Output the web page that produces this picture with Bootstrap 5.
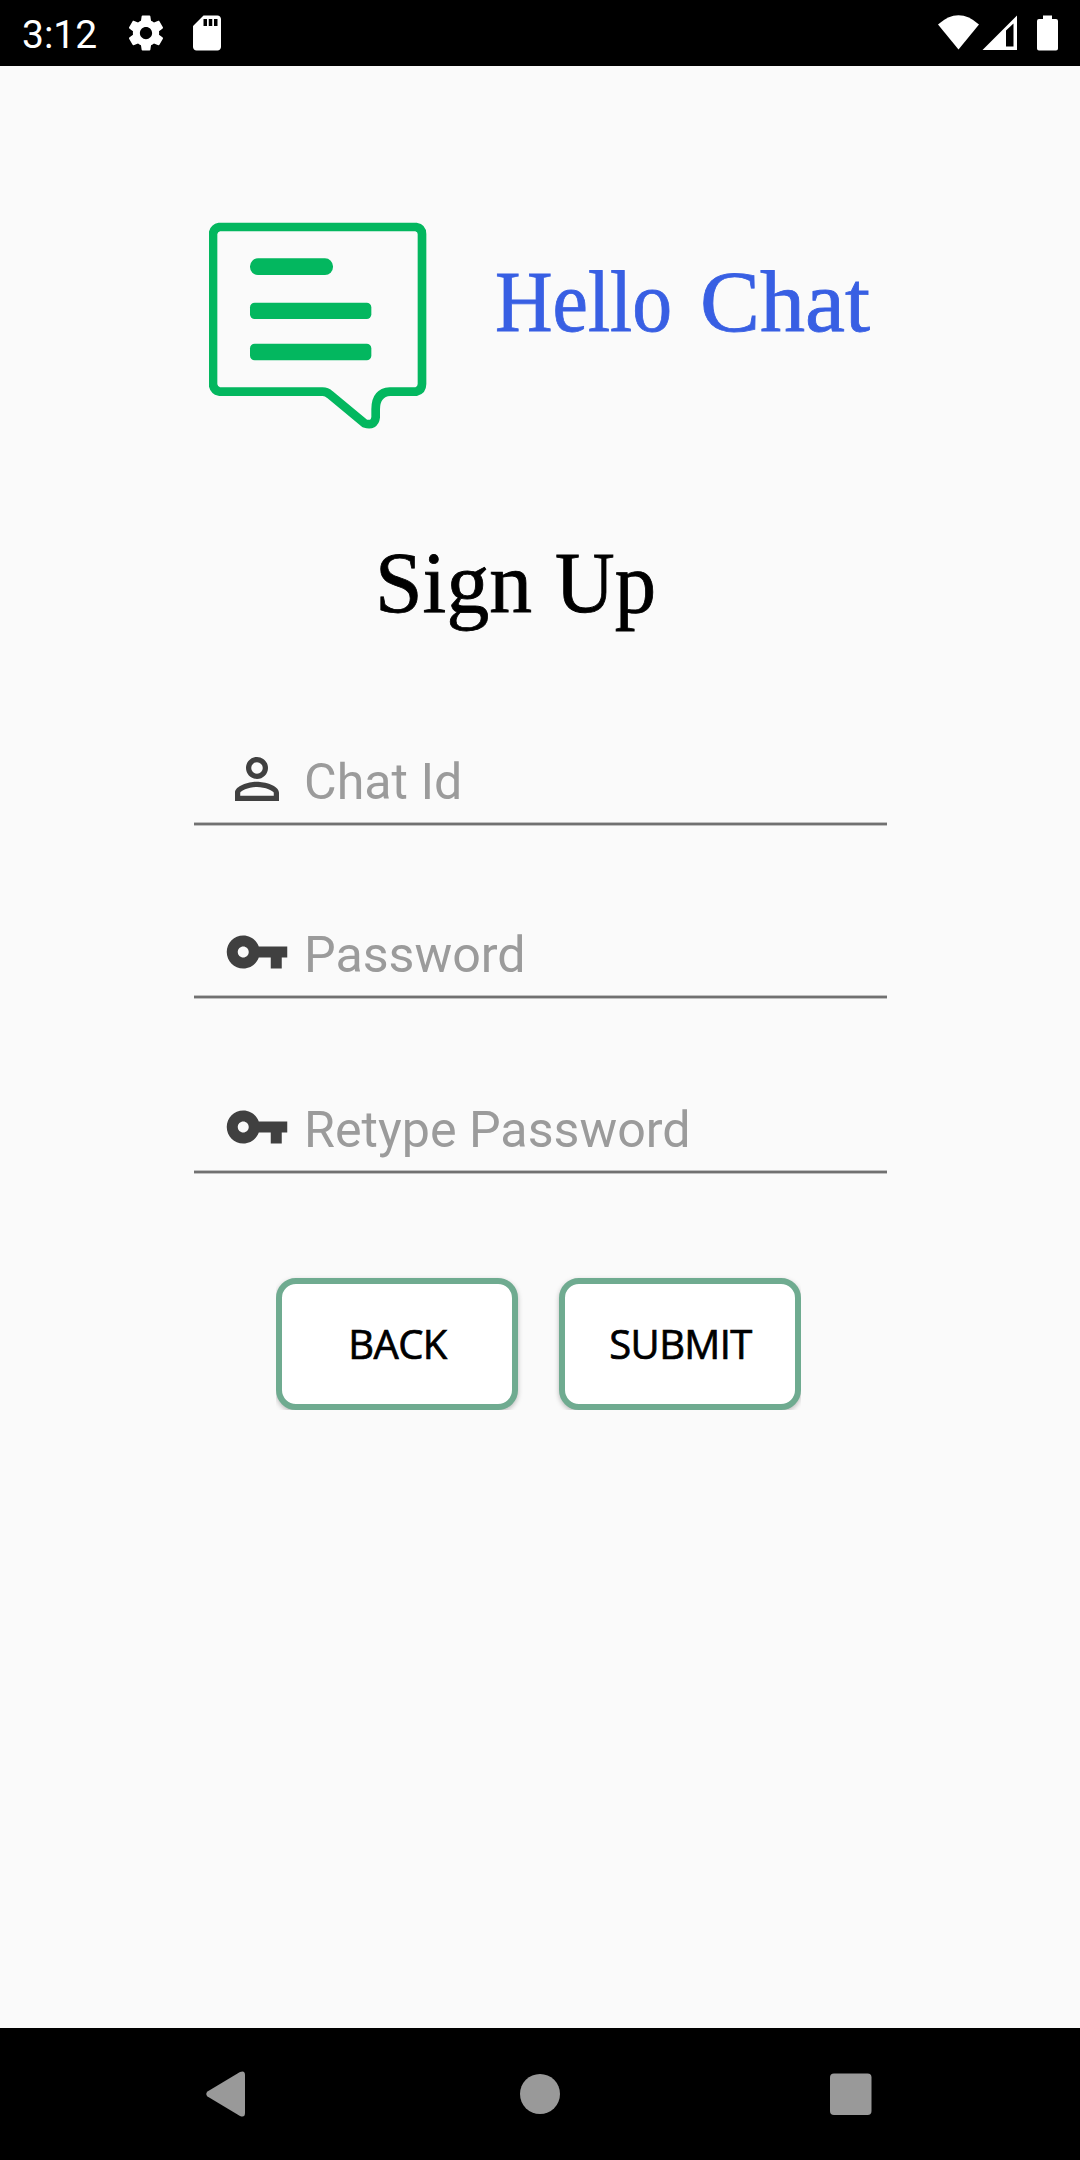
<!DOCTYPE html>
<html lang="en">
<head>
<meta charset="utf-8">
<meta name="viewport" content="width=device-width, initial-scale=1">
<title>Hello Chat - Sign Up</title>
<link href="https://cdn.jsdelivr.net/npm/bootstrap@5.3.0/dist/css/bootstrap.min.css" rel="stylesheet">
<style>
  body { background: #fafafa; font-family: Roboto, sans-serif; }
  svg { display: block; flex: none; }
  .status-bar { height: 66px; padding: 0 21px 0 22px; background: #000; color: #fff; }
  .clock { font-size: 39px; line-height: 66px; width: 103px; padding-top: 3px; }
  .status-bar .sd { margin-left: 19px; }
  .brand-row { padding: 156px 0 0 209px; gap: 56px; }
  .wordmark { font-family: "Liberation Serif", serif; font-size: 86px; }
  .heading-row { padding: 84px 0 0 370px; }
  .signup-form { width: 693px; margin: 68px 0 0 194px; }
  .field-line { height: 80px; padding-left: 30px; }
  .rule-line { height: 4px; background: linear-gradient(#c0c0c0 25%, #717171 25% 75%, #c0c0c0 75%); margin-bottom: 89px; }
  .rule-line.wide-gap { margin-bottom: 91px; }
  .field-line svg { fill: #404040; margin-top: 4px; }
  .field-line label { font-size: 50.2px; line-height: 60px; color: #9b9b9b; margin: 10px 0 0 14px; white-space: nowrap; }
  .button-row { padding-left: 82px; gap: 41px; margin-top: 104px; }
  .btn-outline-sea { --bs-btn-color: #000; --bs-btn-bg: #fff; --bs-btn-border-color: #6fab90; --bs-btn-hover-bg: #f1f8f5; --bs-btn-hover-border-color: #6fab90; width: 242px; height: 132px; padding: 0 0 0 1px; border-width: 6px; border-radius: 20px; font: 500 40px/120px "Open Sans", sans-serif; letter-spacing: -.6px; -webkit-text-stroke: .7px #000; box-shadow: 0 2px 5px rgba(0,0,0,.25); clip-path: inset(-3px -6px 0 0); }
  .btn-outline-sea.submit { clip-path: inset(-3px 0 0 -6px); }
  .nav-bar { height: 132px; background: #000; padding: 0 207px 0 206px; }
  .nav-bar .home { margin-left: 3px; }
</style>
</head>
<body class="d-flex flex-column min-vh-100 overflow-hidden">
<header class="status-bar d-flex align-items-center">
  <span class="clock">3:12</span>
  <svg width="42" height="42" viewBox="0 0 24 24" fill="#fff"><path d="M19.43 12.98c.04-.32.07-.64.07-.98s-.03-.66-.07-.98l2.11-1.65c.19-.15.24-.42.12-.64l-2-3.46c-.12-.22-.39-.3-.61-.22l-2.49 1c-.52-.4-1.08-.73-1.69-.98l-.38-2.65C14.46 2.18 14.25 2 14 2h-4c-.25 0-.46.18-.49.42l-.38 2.65c-.61.25-1.17.59-1.69.98l-2.49-1c-.23-.09-.49 0-.61.22l-2 3.46c-.13.22-.07.49.12.64l2.11 1.65c-.04.32-.07.65-.07.98s.03.66.07.98l-2.11 1.65c-.19.15-.24.42-.12.64l2 3.46c.12.22.39.3.61.22l2.49-1c.52.4 1.08.73 1.69.98l.38 2.65c.03.24.24.42.49.42h4c.25 0 .46-.18.49-.42l.38-2.65c.61-.25 1.17-.59 1.69-.98l2.49 1c.23.09.49 0 .61-.22l2-3.46c.12-.22.07-.49-.12-.64l-2.11-1.65zM12 15.5c-1.93 0-3.5-1.57-3.5-3.5s1.57-3.500 3.500-3.500 3.500 1.570 3.500 3.500-1.570 3.500-3.500 3.500z"/></svg>
  <svg class="sd" width="42" height="42" viewBox="0 0 24 24" fill="#fff"><path d="M18 2h-8L4.020 8 4 20c0 1.100.9 2 2 2h12c1.100 0 2-.9 2-2V4c0-1.100-.9-2-2-2zm-6 6h-2V4h2v4zm3 0h-2V4h2v4zm3 0h-2V4h2v4z"/></svg>
  <svg class="ms-auto" width="121" height="36" viewBox="0 0 121 36" fill="#fff">
    <path d="M0 9.500Q20.500-9 41 9.500L20.500 34.500Z"/>
    <path fill-rule="evenodd" d="M44.500 35 79 .5V35ZM68 15.500V31.500H75.500V8.500Z"/>
    <path d="M105 .5h9v3.500h4q2 0 2 2v27.500q0 2-2 2h-17q-2 0-2-2V6q0-2 2-2h4Z"/>
  </svg>
</header>

<main class="flex-grow-1">
  <div class="brand-row d-flex">
    <svg width="218" height="208" viewBox="57 66 654 624" fill="none" stroke="#03b75f" stroke-width="26" stroke-linejoin="round">
      <path d="M88 81H678Q696 84 696 102V552Q696 571 678 575H600Q557 578 557 628V652Q554 679 524 670L420 584Q410 575 398 575H88Q72 571 69 554V100Q72 84 88 81Z"/>
      <g fill="#03b75f" stroke="none"><rect x="180" y="175" width="249" height="50" rx="24"/><rect x="180" y="308" width="364" height="49" rx="14"/><rect x="180" y="431" width="364" height="50" rx="14"/></g>
    </svg>
    <svg class="wordmark" width="400" height="140" fill="#385fe3" stroke="#385fe3" stroke-width=".8">
      <text x="12" y="108.500" textLength="177" lengthAdjust="spacingAndGlyphs">Hello</text>
      <text x="217" y="108.500" textLength="170" lengthAdjust="spacingAndGlyphs">Chat</text>
    </svg>
  </div>
  <div class="heading-row">
    <svg class="wordmark" width="310" height="160" fill="#000" stroke="#000" stroke-width=".8">
      <text x="5" y="97.500" textLength="157" lengthAdjust="spacingAndGlyphs">Sign</text>
      <text x="185" y="97.500" textLength="101" lengthAdjust="spacingAndGlyphs">Up</text>
    </svg>
  </div>
  <form class="signup-form">
    <div class="field-line d-flex">
      <svg width="66" height="66" viewBox="0 0 24 24"><path d="M12 5.900a2.100 2.100 0 1 1 0 4.200 2.100 2.100 0 0 1 0-4.200m0 9c2.970 0 6.100 1.460 6.100 2.100v1.100H5.900V17c0-.64 3.130-2.100 6.100-2.100M12 4C9.790 4 8 5.790 8 8s1.790 4 4 4 4-1.790 4-4-1.790-4-4-4zm0 9c-2.670 0-8 1.340-8 4v3h16v-3c0-2.660-5.330-4-8-4z"/></svg>
      <label>Chat Id</label>
    </div>
    <div class="rule-line"></div>
    <div class="field-line d-flex">
      <svg width="66" height="66" viewBox="0 0 24 24"><path d="M12.650 10C11.830 7.670 9.610 6 7 6c-3.310 0-6 2.690-6 6s2.690 6 6 6c2.610 0 4.830-1.670 5.650-4H17v4h4v-4h2v-4H12.650zM7 14c-1.100 0-2-.9-2-2s.9-2 2-2 2 .9 2 2-.9 2-2 2z"/></svg>
      <label>Password</label>
    </div>
    <div class="rule-line wide-gap"></div>
    <div class="field-line d-flex">
      <svg width="66" height="66" viewBox="0 0 24 24"><path d="M12.650 10C11.830 7.670 9.610 6 7 6c-3.310 0-6 2.690-6 6s2.690 6 6 6c2.610 0 4.830-1.670 5.650-4H17v4h4v-4h2v-4H12.650zM7 14c-1.100 0-2-.9-2-2s.9-2 2-2 2 .9 2 2-.9 2-2 2z"/></svg>
      <label>Retype Password</label>
    </div>
    <div class="rule-line mb-0"></div>
    <div class="button-row d-flex">
      <button type="button" class="btn btn-outline-sea">BACK</button>
      <button type="button" class="btn btn-outline-sea submit">SUBMIT</button>
    </div>
  </form>
</main>

<footer class="nav-bar d-flex align-items-center justify-content-between">
  <svg width="40" height="46" viewBox="0 0 40 46" fill="#999"><path d="M1.500 20.500 34 1Q39-1 39 4V42Q39 47 34 45L1.500 25.500Q-1 23 1.500 20.500Z"/></svg>
  <svg class="home" width="42" height="42" viewBox="0 0 42 42" fill="#999"><circle cx="21" cy="21" r="20"/></svg>
  <svg width="43" height="42" viewBox="0 0 43 42" fill="#999"><rect y=".5" width="41.500" height="41.500" rx="4"/></svg>
</footer>
<script src="https://cdn.jsdelivr.net/npm/bootstrap@5.3.0/dist/js/bootstrap.bundle.min.js"></script>
</body>
</html>
